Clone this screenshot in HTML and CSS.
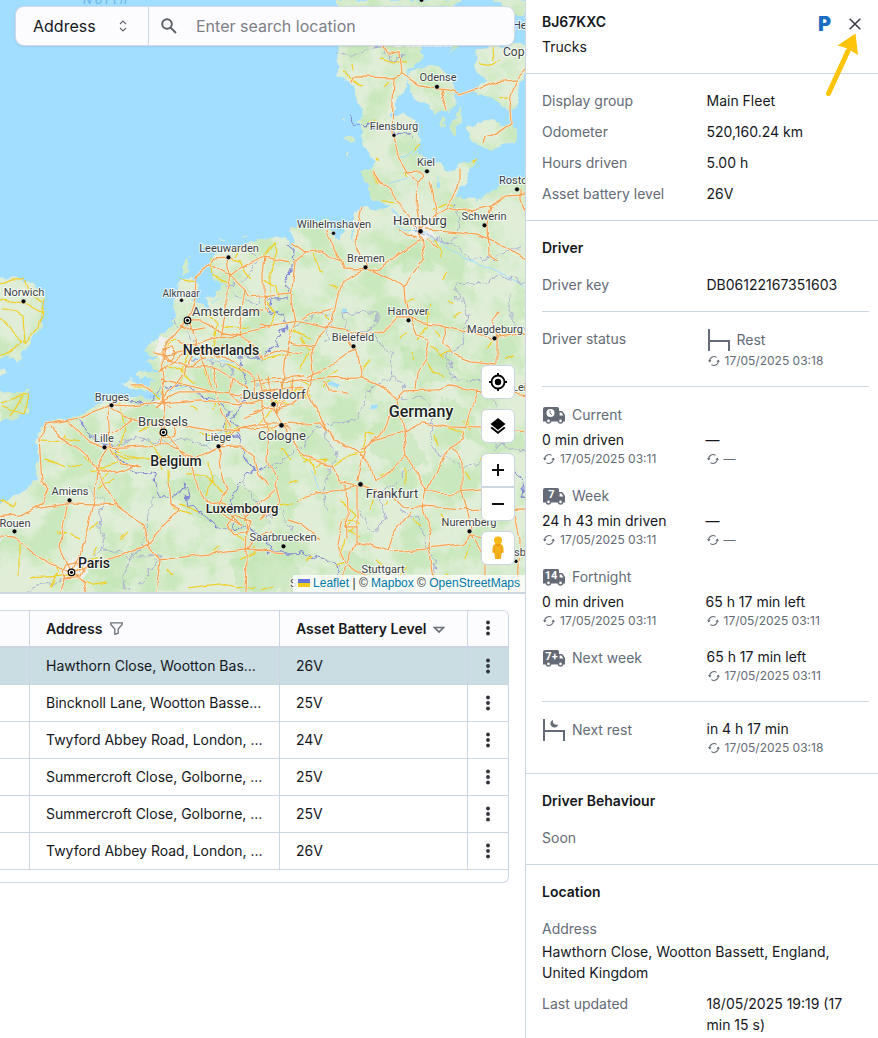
FILE: index.html
```html
<!DOCTYPE html>
<html lang="en">
<head>
<meta charset="utf-8">
<title>Fleet map</title>
<link rel="stylesheet" href="styles.css">
</head>
<body>
<svg class="sprite" aria-hidden="true">
  <symbol id="sync" viewBox="0 0 12 12"><path d="M1.7 6.6A4.4 4.4 0 0 1 8.6 2.4M10.3 5.4A4.4 4.4 0 0 1 3.4 9.6" fill="none" stroke="currentColor" stroke-width="1.1"/><path d="M0 5.2h3.600L1.700 7.500zM12 6.800H8.400l1.900-2.300z" fill="currentColor"/></symbol>
  <symbol id="dots" viewBox="0 0 4 16"><circle cx="2" cy="2.5" r="1.9"/><circle cx="2" cy="8" r="1.9"/><circle cx="2" cy="13.5" r="1.9"/></symbol>
  <symbol id="van" viewBox="0 0 24 24"><path fill="currentColor" d="M3 4h12.500q1.500 0 1.500 1.500V8h2.500q1 0 1.600.900L23 12v6.500h-1.600a3 3 0 0 1-5.800 0H9.400a3 3 0 0 1-5.800 0H1V6q0-2 2-2z"/><path fill="#fff" d="M17.600 9.500h1.900l1.900 2.900h-3.800z"/><circle cx="6.500" cy="17.900" r="1.300" fill="#fff"/><circle cx="18.500" cy="17.900" r="1.300" fill="#fff"/></symbol>
</svg>
<div class="app">
<main class="main">
  <section class="map" aria-label="Map">
    <svg class="map-canvas" viewBox="0 0 525 592" preserveAspectRatio="xMidYMid slice" aria-hidden="true">
      <defs>
        <filter id="coast" x="0" y="0" width="525" height="592" filterUnits="userSpaceOnUse" color-interpolation-filters="sRGB"><feTurbulence type="fractalNoise" baseFrequency=".09" numOctaves="3" seed="4"/><feDisplacementMap in="SourceGraphic" scale="11" xChannelSelector="R" yChannelSelector="G"/></filter>
        <filter id="bend" x="0" y="0" width="525" height="592" filterUnits="userSpaceOnUse" color-interpolation-filters="sRGB"><feTurbulence type="fractalNoise" baseFrequency=".05" numOctaves="2" seed="9"/><feDisplacementMap in="SourceGraphic" scale="8" xChannelSelector="R" yChannelSelector="G"/></filter>
        <filter id="jag" x="0" y="0" width="525" height="592" filterUnits="userSpaceOnUse" color-interpolation-filters="sRGB"><feTurbulence type="fractalNoise" baseFrequency=".12" numOctaves="2" seed="3"/><feDisplacementMap in="SourceGraphic" scale="12" xChannelSelector="R" yChannelSelector="G"/></filter>
        <filter id="woods" x="0" y="0" width="525" height="592" filterUnits="userSpaceOnUse" color-interpolation-filters="sRGB"><feTurbulence type="fractalNoise" baseFrequency=".03" numOctaves="5" seed="12"/><feColorMatrix values="0 0 0 0 .79  0 0 0 0 .91  0 0 0 0 .74  4 0 0 0 -1.650"/><feComposite in2="SourceGraphic" operator="in"/></filter>
        <g id="land">
          <path d="M0 502L20 495 30 487 37 478 38 462 38 435 43 425 67 420 82 415 100 403 110 398 127 395 147 399 158 396 153 391 133 390 122 383 130 378 150 386 155 380 135 374 138 370 157 372 150 364 147 361 160 360 143 353 160 338 173 322 177 293 180 280 193 279 197 290 193 303 207 308 206 297 216 299 222 285 214 280 210 265 212 257 227 250 247 244 270 238 277 238 285 242 293 244 290 230 300 222 327 220 333 232 340 242 344 232 338 226 352 224 357 208 362 206 373 210 390 208 398 220 405 228 396 214 384 203 370 201 368 185 358 173 373 167 375 160 363 147 360 130 355 124 360 117 358 100 352 83 335 73 340 47 337 0 462 0 430 30 420 45 423 57 414 62 407 75 406 88 397 97 393 117 417 117 418 132 420 147 405 157 418 150 427 163 440 165 457 173 460 163 477 158 468 177 457 197 477 200 490 192 500 185 530 177 530 600 -5 600z"/>
          <path d="M407 79L414 68 433 65 448 74 457 97 450 110 437 113 420 103 411 92zM473 67L477 50 490 47 530 43 530 70 518 87 513 110 500 107 493 97 473 93 484 80zM467 127L487 120 513 127 518 140 505 146 487 150 469 140zM460 107L463 112 455 136 450 130zM492 0h33v18l-12-6zM438 117l8 6-3 4zM450 52l5-8 2 6z"/>
          <path d="M-5 276L17 278 33 283 43 293 44 312 37 332 27 345 17 362 8 356-5 365zM-5 370l10-2 3 6-13 6zM-5 393L28 392 27 412 18 416 8 420-5 425z"/>
          <path d="M181 268l6-8 1 8-6 6zM188 257l6-5-4 6zM200 247l10-4-7 5zM217 241l10-3-4 3zM243 237l9-2-6 3zM343 118l3-3 1 6zM344 138l8-3 5 6-7 3zM346 153l3-3v6z"/>
        </g>
        <path id="trunk" d="M352 82L353 77 393 78 402 74 420 86 437 89 452 91 459 94 478 88 493 82 517 80 528 68M383 47L387 52 400 53 402 74 394 78 393 103 392 133 397 155 407 172 418 183 417 207 420 230M440 90L442 97 446 110M517 80L510 95 509 110 510 125 497 134 487 137 483 144M405 172L420 171 424 175 418 183M420 231L435 215 447 209 455 211 480 209 490 207 507 195 528 194M460 170L460 183 453 200 447 209M373 172L380 182 392 190 397 202 410 215 417 228M429 182L432 195 434 205 436 217M520 190L520 200 525 213M425 230L440 231 475 235 489 240 505 247 528 261M492 207L488 225 489 255 498 261M420 240L413 244 395 258 380 268 370 270 355 271 343 270 340 260 330 237 328 230M362 208L357 230 356 245 361 255 367 268M342 262L323 252 305 253 297 247 292 245M305 253L295 262 293 280 291 300 295 325M367 270L342 283 338 295 332 322 328 328M373 270L390 277 405 288 406 300 410 317M420 232L424 258 412 275 405 288M425 240l12 8M400 229l8 6 10 2
          M260 325L267 327 300 322 327 328 360 335 383 331 397 317 410 317 423 323 443 325 467 330 493 338 528 333M443 325L444 345 453 355 470 361 495 364M497 335V365M497 338l-4-18 6-10M410 317L417 335 428 340 425 357 417 372 415 390M398 402L387 420 380 435 365 448 358 480M295 325L285 355 282 382M328 328L310 348 313 372 307 392M260 385L300 380 327 378 362 377 380 385 397 400M307 377L327 367 345 355 357 350 362 377M353 350l-8-12M397 400L405 392 435 391 450 386 475 390 528 396M282 425L290 438 300 453 313 460 330 465 340 482 357 485M307 392L317 412 332 438 357 453 370 465 375 482M282 425L320 422 333 438M325 382l6 10 16 1M360 485L393 498 403 508 423 507 460 510 528 508M397 400L403 430 407 455 423 485 427 492 423 508 432 528 430 548 437 592M360 450L377 440 403 432 423 422 447 427 480 428 528 432M427 492L440 462 450 448 463 462 463 492 473 528M427 492L450 493 480 490M478 390L470 415 463 440 450 448M357 485V540L348 562 338 592M345 485L347 540M357 542L390 552 430 549 460 545 470 535 500 540M388 552L393 535 410 512M375 482L393 468 407 455M278 475L275 485 280 502 260 520M297 503L317 493 345 490 357 485M345 528h12M343 520l-5 25 8 18 14 10 30 6M470 535l15 22 0 35M515 515l5 25-2 52M320 540l-18-15-15-5
          M250 383L263 380 285 378 305 376M250 396L266 392 280 390 303 387M258 374L262 392 262 412 270 432M270 376L272 400 276 412 282 425M282 382L280 400 276 412M292 379l-2 14-14 20M262 405l14 4 16-4 14-12M253 412l20-8M270 432l12-7 8 5M240 398l22 2M245 418l17-8M240 430l28-2M270 432l-2 28 8 15M312 346l-24-4M303 320l12-8 18-4M262 357l20-7 20 2
          M72 572L113 558 147 545 160 560 200 555 247 550 285 553M243 505L247 528 245 592M160 560L156 592M39 438L42 482 50 490 43 502 20 515-2 517M50 425L60 438 90 458 97 470 95 495 88 530 80 555 72 570M39 438l8-15L80 417 108 405 133 406 163 403 200 400 240 405 262 400M67 420L90 442 105 448M108 406L110 448M110 408L133 420 160 425 185 425 215 430 240 432M105 448L127 447 160 445 163 432M112 435L133 420M163 432L165 402 162 378M97 470L117 507 143 525 148 545M68 503L117 505M67 505L60 548 70 568M33 508L68 503M-2 537L15 538 33 553 50 565 70 572M110 448L120 465 140 468M107 450l-12 18 20 6 22-8M160 445L180 450 195 458 218 446 240 445M218 446L222 475 228 490 215 510 240 525M163 432L178 447 190 460 195 480 205 500 225 505 240 525M218 446L235 432 255 425 282 425M147 545L165 525 180 510 172 505 170 480M243 520L255 508 275 490M66 564l10-2 6 8-4 8-12 1-4-7zM72 572l12 10 2 10M66 576l-6 16M228 525l10-8 12 4-4 10-12 2zM163 420l10 4 2 12-10 4-6-8zM157 408l8-6 6 6M240 445l14 14 4 16 10 10M262 552l-14-2 8-14 16-4
          M187 320L178 330 165 345 163 360 165 378 162 402M190 320L197 345 183 375 163 400M197 345L220 337 238 335 270 328M150 352L167 355 197 350 217 355 233 362 253 378M163 355L187 368 213 368 233 378 245 390M163 402L180 392 213 392 240 395M198 348L213 390 230 428M195 278L194 300 187 320M195 278L210 265 215 258 228 257 234 258M228 257L230 276 227 290 227 310 222 336M210 265L230 276 240 268 262 257 290 262M230 276L245 290 250 297 270 295 292 293M245 290L238 335M264 257L262 275 262 292M177 340l10 6 10-2M180 324l14 6 12-2M187 320l13 0 16 10 22 5M162 348l10-2 4 8-6 6-8-3zM160 372l12-10 14-8M190 368l10-8 14-2M213 368l4 20M222 345l-4 12M233 378l-3 15 10 10M253 378l2 20M162 378l20 6 30 8M238 335l18 10 6 15M240 315l24-6M262 292l6 18M130 386l12 0 10 8"/>
      </defs>
      <rect width="525" height="592" fill="#a2deff"/>
      <g filter="url(#coast)"><use href="#land" fill="#e0eed8"/></g>
      <g filter="url(#coast)"><g filter="url(#woods)"><use href="#land"/></g></g>
      <g fill="#bfe6b2" opacity=".5" filter="url(#jag)"><path d="M165 480l50-5 40 15 15 35-40 5-40-15-20-20zM400 345l40 10 12 24-30 5-15-15zM370 420l40 10 20 35-35 5-25-20zM300 430l28 5 10 28-30-7zM440 395l30 15 20 40-40-20zM230 560l60-5 20 37-70 0zM90 570l30-20 18 25-20 17zM400 245l25 5 10 20-30 3zM345 552l30 10-12 30-25-4zM430 350l24 8 8 16-24-4z"/></g>
      <g fill="#f0f1ee" filter="url(#coast)"><path d="M160 338l12 4 3 12-14 8-7-8zM66 560l14-4 8 14-8 12-16-5zM410 226l18-2 6 10-10 8-14-4zM152 402l12-5 8 8-10 5z"/></g>
      <g fill="none" stroke="#a2deff" filter="url(#bend)">
        <path d="M393 222L405 229 421 233 440 242 465 258 490 268 505 275 525 287M352 224l1 18M170 392l20-7M185 356l48 8M390 185l22-10M400 157l20-10M310 470l8 16 9 10M212 303l8-5M438 186v-9M206 444l20-14M332 386l8-1M370 408l8-1M344 309v4"/>
        <path stroke-width="4" d="M438 190v-7M331 386h7M370 408h7M344 308v4M216 282l4 4M338 233v6"/>
      </g>
      <g class="line-state" filter="url(#jag)">
        <path d="M337 53l18 3 14-7 14-2 8 12 15-2M455 205l6 20-8 20-20-5-12-4-7-7M440 240l18 7 20 15 14-5 30-10M525 283l-25-8-20 10-24-2 2 17M325 342l8-27-18-2-20 14M343 313l30-2 6 12-18 10-16-4-2-16M373 333l18 22 2 25 12 3-4 18 20-6 15 22-8 20 10 18 28 12 22-8 20-20M393 375l-26 16-8 28-22 4-22 5-12 18-24 16-20 6M320 423l16 30-14 40 8 20M357 508l15 24 14-12-8-24 20-16 14-14M400 510l16 6 10 25 10 30-6 21M460 295l8 18-8 34-14 10 6 20 28 4 20 6M260 382l-20 18M170 320l18 10 10 22-8 8 40 6 6 18M113 445l20-6 30 4 20-5 30 10M88 487l14 13-2 28 4 20-12 10-22 22-32 5-14 10M100 548l30 10 30-3-20 32M148 545l-16 8-10 25 5 14M157 495l-10 20-2 30M247 244l8 14-3 14-8 8-16 5 8 12 20 6 13-6M243 480l10 18 17 25M262 517l20-6 10 20M510 294v30l15 4M487 390l14 24-3 32 27 5"/>
      </g>
      <g class="line-border" filter="url(#jag)">
        <path d="M285 246L293 248 292 268 287 285 286 298 270 298 268 310 285 315 285 327 275 345 260 358 237 358 247 382 243 400 233 418 240 442 248 462 255 468 243 478 230 500 235 515 233 526M123 400L147 405 163 388 187 385 207 398 230 412 223 428 240 440M82 417L83 428 97 442 113 445 115 455 133 470 155 475 157 495 180 495 185 482 187 502 203 515 217 527 247 528 267 540 270 552 297 552 340 565 334 592M350 113L357 125 370 126 388 130 400 134 413 134M255 468l20 2M513 468l10 18 3 14"/>
      </g>
      <g fill="none" filter="url(#bend)">
        <path class="road-minor" d="M0 284l12-5 13 0 5 14 12 10M0 300l22 3 20 11M25 345l-2-28-22-10M0 318l22 25-22 12M44 300l-5 28-14 17M0 402l20-6 8 0-4 18-24-8M22 397l-12 19M380 58l12 4 15 0M352 64l1 6M345 73l10 8 8 6M383 87l6-5M480 64l14 2 6-6M492 48l1 14M500 98l8-1M370 122l7-2M377 158l2 4M420 145l-6 6M430 210l14-6 10 2M471 163l6-4M404 172l2 6M373 174l5 8M382 202l15 1M435 240l6 12 0 6M313 255l6 16 4 2M330 283l8 4M442 280l6-8M330 320l-4-6M262 258l12-16 3 10-8 20 0 20M262 280l14 5 2 12M267 300l9 12-6 16M212 257l2 20 14 6M228 257l12 4 12 18M236 257l6-10M180 278l14 4M155 357l10-10 10-8M167 365l15 6 0 16M190 352l-10 20 14 12M200 310l18 14-4 24M222 325l26 3M225 365l26 10M205 372l6 15M39 440l25 2 0-8M62 438l18 3M45 460l20 7M68 465l14 1M85 458l22 14-6 14M90 470l20-5 12-4M100 490l13-10M132 388l14 0 14 12M120 400l6 30-8 20 20 10M140 432l16-12 12 4M150 440l10 18 4 12M170 470l1 24M185 475l20 0 22 20M209 460l2 20-4 17M185 450l8 24 10 24M105 448l22 10 36 0M180 505l16 6M190 515l-15-6M225 420l0 16 14-8M190 405l8 6M200 432l14 3M213 410l2-8M70 535l10 4M57 533l10 2M90 530l8-8M92 555l6-7M120 540l8-8M50 560l8 12-8 16M28 578l42-2 24 8 14-2M19 540l0 36M85 560l12-2M0 500l14 8 2-6M188 588l30-4 18 4 20-2M240 560l14-6 0-8M167 569l5 6M210 553l8-6M233 530l12 12M262 360l26-6 0-10M300 380l8 4 2 12M262 385l10 14 28-10M290 380l0 12 16 4-8-10M270 400l24 6M252 430l16-14 10-20M267 425l14 14M300 338l10 14-10 20M290 332l20 6M362 368l8-10M325 390l6-8M327 378l12-8M425 360l8 12 12 6M440 355l12-1M415 362l-3-8M487 348l8-12M435 435l3 12M417 340l10-14 4-22M363 448l4-16 8 2M300 455l14 10 0 10M304 462l22-3-10 8M333 465l18-10 14-4M405 485l0-16M340 500l14 16-8 14 14 8M342 520l18 4-12 10M345 540l-4 16 8 8M335 565l12-3M370 508l6-14M384 506l4-4M392 470l-12 4M465 470l5 10M463 420l8 10-2-12M468 545l-3 14M447 427l20 8M440 580l8-6M260 590l14-4M290 485l8-3M300 500l14-5M280 506l14-2M290 460l-9-12M425 312l6 4M433 330l8 8M447 300l6 4M455 318l6-4M400 338l6-4M415 300l-8 2M430 345l14 14M420 525l-8-6M480 460l8-6M505 360l10-4M514 330l8 4M500 470l8 8M440 515l6 10M375 560l8 6M400 575l8-8M320 575l10 6M305 560l8-4"/>
        <use class="road-case" href="#trunk"/>
        <use class="road-trunk" href="#trunk"/>
      </g>
      <g class="place town">
        <text x="438" y="81">Odense</text><text x="394" y="130">Flensburg</text><text x="426" y="166">Kiel</text><text x="499" y="184" class="start">Rosto</text><text x="484" y="220">Schwerin</text><text x="334" y="228">Wilhelmshaven</text><text x="366" y="262">Bremen</text><text x="229" y="252">Leeuwarden</text><text x="24" y="296">Norwich</text><text x="181" y="297" class="small">Alkmaar</text><text x="408" y="315">Hanover</text><text x="353" y="341">Bielefeld</text><text x="495" y="333">Magdeburg</text><text x="112" y="401">Bruges</text><text x="104" y="442">Lille</text><text x="218" y="441">Liège</text><text x="70" y="495">Amiens</text><text x="15" y="527">Rouen</text><text x="283" y="541">Saarbruecken</text><text x="469" y="526">Nuremberg</text><text x="383" y="573">Stuttgart</text><text x="513" y="29" class="start">He</text><text x="512" y="391" class="start">Lei</text><text x="514" y="556" class="start">sb</text><text x="290" y="587" class="start">S</text>
      </g>
      <g class="place city"><text x="420" y="225">Hamburg</text><text x="226" y="316">Amsterdam</text><text x="274" y="399">Dusseldorf</text><text x="282" y="440">Cologne</text><text x="163" y="426">Brussels</text><text x="392" y="498">Frankfurt</text></g>
      <g class="place town"><text x="503" y="56" class="start large">Cop</text></g>
      <g class="place country"><text x="221" y="355">Netherlands</text><text x="176" y="466">Belgium</text><text x="242" y="513" class="minor">Luxembourg</text><text x="421" y="417" class="major">Germany</text><text x="94" y="568">Paris</text><text x="423" y="46">Denmark</text></g>
      <text class="sea-name" x="83" y="4">North</text>
      <g fill="#000" stroke="#fff" stroke-opacity=".5"><circle cx="437" cy="87" r="2.400"/><circle cx="394" cy="135.500" r="2"/><circle cx="427" cy="171.500" r="2.400"/><circle cx="517" cy="189.500" r="2.400"/><circle cx="484.500" cy="225.500" r="2.400"/><circle cx="333.500" cy="233.500" r="2"/><circle cx="365.500" cy="267.500" r="2.400"/><circle cx="420.500" cy="231.500" r="2.600"/><circle cx="228.500" cy="257.500" r="2.400"/><circle cx="23.500" cy="301.500" r="2.400"/><circle cx="181.500" cy="300.500" r="2"/><circle cx="408.500" cy="320.500" r="2.400"/><circle cx="353.500" cy="346.500" r="2.400"/><circle cx="494.500" cy="338.500" r="2.400"/><circle cx="111.500" cy="405.500" r="2.400"/><circle cx="104.500" cy="447.500" r="2.400"/><circle cx="218.500" cy="446.500" r="2.400"/><circle cx="69.500" cy="500.500" r="2.400"/><circle cx="14.500" cy="531.500" r="2.400"/><circle cx="283.500" cy="546.500" r="2.400"/><circle cx="273.500" cy="404.500" r="2.600"/><circle cx="281.500" cy="425.500" r="2.600"/><circle cx="360.500" cy="484.500" r="2.600"/><circle cx="469.500" cy="531.500" r="2.400"/><circle cx="516" cy="561.500" r="2"/><circle cx="421.500" cy="0" r="2.400"/></g>
      <g><g fill="#fff" stroke="#000" stroke-width="1.200"><circle cx="187.500" cy="320.500" r="3.300"/><circle cx="163.500" cy="432.500" r="3.300"/><circle cx="71.500" cy="572.500" r="3.300"/></g><circle cx="187.500" cy="320.500" r="1.600"/><circle cx="163.500" cy="432.500" r="1.600"/><circle cx="71.500" cy="572.500" r="1.600"/></g>
    </svg>

    <form class="search">
      <button type="button" class="search-type">Address
        <svg width="8" height="12" viewBox="0 0 8 12" fill="none" stroke="#60656e" stroke-width="1.200"><path d="M1 4l3-3 3 3M1 8l3 3 3-3"/></svg>
      </button>
      <svg class="search-icon" width="16" height="16" viewBox="0 0 16 16" fill="none" stroke="#5c6068" stroke-width="2"><circle cx="6" cy="6" r="4.800"/><path d="M9.600 9.600l5.400 5.400"/></svg>
      <input class="search-input" type="text" placeholder="Enter search location" aria-label="Enter search location">
    </form>

    <div class="controls">
      <button type="button" aria-label="Locate"><svg width="20" height="20" viewBox="0 0 20 20"><g fill="none" stroke="#000" stroke-width="1.800"><circle cx="10" cy="10" r="6.500"/><path d="M10 1v3M10 16v3M1 10h3M16 10h3"/></g><circle cx="10" cy="10" r="3.200"/></svg></button>
      <button type="button" aria-label="Layers"><svg width="16" height="18" viewBox="0 0 16 18"><path d="M8 1l7.500 6L8 13 .5 7zM1.900 9.800L8 14.500l6.100-4.700 1.400 1.100L8 17 .5 10.900z"/></svg></button>
      <div class="zoom">
        <button type="button" aria-label="Zoom in"><svg width="12" height="12" viewBox="0 0 12 12"><path d="M5 0h2v5h5v2H7v5H5V7H0V5h5z" fill="#111"/></svg></button>
        <button type="button" aria-label="Zoom out"><svg width="12" height="12" viewBox="0 0 12 12"><path d="M0 5h12v2H0z" fill="#111"/></svg></button>
      </div>
      <button type="button" aria-label="Street view"><svg width="14" height="24" viewBox="0 0 14 24"><path fill="#f5b11c" d="M4 8.500h6q2 0 2.200 2l.6 6-1.800.300-.5 1.200-.6 5H4.100l-.6-5-.5-1.200-1.800-.300.600-6q.2-2 2.200-2z"/><path fill="#e88f14" d="M3.500 8h7L7 10.500zM6.600 17h.8v6h-.8zM3.200 11h.6l-.3 6h-.6zM10.200 11h.6l.3 6h-.6z"/><circle cx="7" cy="4.600" r="4" fill="#fbb917"/></svg></button>
    </div>

    <p class="attribution"><svg width="12" height="8" viewBox="0 0 12 8"><path fill="#6475dc" d="M0 0h12v4H0z"/><path fill="#f0cd12" d="M0 4h12v4H0z"/></svg> <a href="#">Leaflet</a> | © <a href="#">Mapbox</a> © <a href="#">OpenStreetMaps</a></p>
  </section>

  <section class="grid-box">
    <table class="assets">
      <colgroup><col class="c-edge"><col class="c-address"><col class="c-battery"><col class="c-menu"></colgroup>
      <thead><tr><th></th><th>Address <svg class="funnel" width="13" height="13" viewBox="0 0 13 13" fill="none" stroke="#6b7079" stroke-width="1.300"><path d="M.800.800h11.400v1.600L8.200 7v4.200l-3.400 1.100V7L.800 2.400z"/></svg></th><th>Asset Battery Level <svg class="sort" width="12" height="8" viewBox="0 0 12 8" fill="none" stroke="#6b7079" stroke-width="1.700"><path d="M1.500 1.500h9L6 6z"/></svg></th><th><button type="button" class="menu" aria-label="Columns"><svg><use href="#dots"/></svg></button></th></tr></thead>
      <tbody>
        <tr class="selected"><td></td><td>Hawthorn Close, Wootton Bas...</td><td>26V</td><td><button type="button" class="menu" aria-label="Row menu"><svg><use href="#dots"/></svg></button></td></tr>
        <tr><td></td><td>Bincknoll Lane, Wootton Basse...</td><td>25V</td><td><button type="button" class="menu" aria-label="Row menu"><svg><use href="#dots"/></svg></button></td></tr>
        <tr><td></td><td>Twyford Abbey Road, London, ...</td><td>24V</td><td><button type="button" class="menu" aria-label="Row menu"><svg><use href="#dots"/></svg></button></td></tr>
        <tr><td></td><td>Summercroft Close, Golborne, ...</td><td>25V</td><td><button type="button" class="menu" aria-label="Row menu"><svg><use href="#dots"/></svg></button></td></tr>
        <tr><td></td><td>Summercroft Close, Golborne, ...</td><td>25V</td><td><button type="button" class="menu" aria-label="Row menu"><svg><use href="#dots"/></svg></button></td></tr>
        <tr><td></td><td>Twyford Abbey Road, London, ...</td><td>26V</td><td><button type="button" class="menu" aria-label="Row menu"><svg><use href="#dots"/></svg></button></td></tr>
      </tbody>
    </table>
  </section>
</main>

<aside class="panel">
  <header class="panel-head">
    <div class="ident"><h1>BJ67KXC</h1><p>Trucks</p></div>
    <span class="parking">P</span>
    <button type="button" class="close" aria-label="Close"><svg width="12" height="12" viewBox="0 0 12 12" fill="none" stroke="#33373f" stroke-width="1.500"><path d="M.700.700l10.600 10.600M11.300.700L.700 11.300"/></svg></button>
    <svg class="pointer" width="34" height="64" viewBox="0 0 34 64" aria-hidden="true"><path d="M3.500 60.500L23 18" stroke="#fdc408" stroke-width="5" stroke-linecap="round"/><path d="M30.500.500L12.500 12.500l8.500 2.500 4.500 2.500 7.500 4.500z" fill="#fdc408"/></svg>
  </header>

  <section class="block">
    <div class="pair"><span class="label">Display group</span><span>Main Fleet</span></div>
    <div class="pair"><span class="label">Odometer</span><span>520,160.24 km</span></div>
    <div class="pair"><span class="label">Hours driven</span><span>5.00 h</span></div>
    <div class="pair"><span class="label">Asset battery level</span><span>26V</span></div>
  </section>

  <section class="block driver">
    <h2>Driver</h2>
    <div class="pair"><span class="label">Driver key</span><span>DB06122167351603</span></div>
    <hr>
    <div class="pair"><span class="label">Driver status</span>
      <div><div class="caption"><svg viewBox="0 0 24 24" fill="none" stroke="currentColor" stroke-width="2"><path d="M2 1v22M2 13h20v10"/></svg>Rest</div><div class="stamp"><svg><use href="#sync"/></svg>17/05/2025 03:18</div></div>
    </div>
    <hr>
    <div class="drive">
      <div class="caption"><svg viewBox="0 0 24 24"><use href="#van"/><circle cx="8.500" cy="10" r="4" fill="#fff"/><path d="M8 7.500V10l1.800 1.500" fill="none" stroke="currentColor"/></svg>Current</div>
      <div>0 min driven<div class="stamp"><svg><use href="#sync"/></svg>17/05/2025 03:11</div></div>
      <div>—<div class="stamp"><svg><use href="#sync"/></svg>—</div></div>
    </div>
    <div class="drive">
      <div class="caption"><svg viewBox="0 0 24 24"><use href="#van"/><text class="van-num" x="9.500" y="14">7</text></svg>Week</div>
      <div>24 h 43 min driven<div class="stamp"><svg><use href="#sync"/></svg>17/05/2025 03:11</div></div>
      <div>—<div class="stamp"><svg><use href="#sync"/></svg>—</div></div>
    </div>
    <div class="drive">
      <div class="caption"><svg viewBox="0 0 24 24"><use href="#van"/><text class="van-num" x="9" y="14">14</text></svg>Fortnight</div>
      <div>0 min driven<div class="stamp"><svg><use href="#sync"/></svg>17/05/2025 03:11</div></div>
      <div>65 h 17 min left<div class="stamp"><svg><use href="#sync"/></svg>17/05/2025 03:11</div></div>
    </div>
    <div class="pair">
      <div class="caption"><svg viewBox="0 0 24 24"><use href="#van"/><text class="van-num" x="9.500" y="14">7+</text></svg>Next week</div>
      <div>65 h 17 min left<div class="stamp"><svg><use href="#sync"/></svg>17/05/2025 03:11</div></div>
    </div>
    <hr>
    <div class="pair">
      <div class="caption"><svg viewBox="0 0 24 24"><path d="M2 1v22M2 13h20v10" fill="none" stroke="currentColor" stroke-width="2"/><path d="M11 2q-3 1-2.500 4.500Q9.500 9.500 12.500 9.500q3 0 3.800-3-3 1-4.500-.800Q10.300 4 11 2z" fill="currentColor"/></svg>Next rest</div>
      <div>in 4 h 17 min<div class="stamp"><svg><use href="#sync"/></svg>17/05/2025 03:18</div></div>
    </div>
  </section>

  <section class="block driver"><h2>Driver Behaviour</h2><p class="label">Soon</p></section>

  <section class="block location">
    <h2>Location</h2>
    <div class="address"><span class="label">Address</span><span>Hawthorn Close, Wootton Bassett, England, United Kingdom</span></div>
    <div class="pair"><span class="label">Last updated</span><span>18/05/2025 19:19 (17 min 15 s)</span></div>
  </section>
</aside>
</div>
</body>
</html>
```
FILE: styles.css
```css
* { box-sizing: border-box; }
body { margin: 0; background: #fff; color: #15171c; font: 14px/21px Inter, "Liberation Sans", sans-serif; }
h1, h2, p { margin: 0; font-size: 14px; font-weight: 400; }
h1, h2 { font-weight: 600; }
button, input { font: inherit; color: inherit; margin: 0; padding: 0; border: 0; background: none; }
.sprite { position: absolute; width: 0; height: 0; }
.app { display: flex; height: 100vh; overflow: hidden; }
.main { flex: 1; min-width: 0; }

.map { position: relative; height: calc(57vh + 2px); border-bottom: 2px solid #ccd5e2; overflow: hidden; }
.map-canvas { display: block; width: 100%; height: 100%; }
.line-state, .line-border { fill: none; stroke: #a9acd2; stroke-width: 1px; }
.line-border { stroke: #8286d3; stroke-width: 1.2px; }
.road-minor { stroke: #f0ce28; stroke-width: 1.2px; }
.road-case { stroke: #f7f1dc; stroke-width: 2.6px; }
.road-trunk { stroke: #f3a050; stroke-width: 1.2px; }
.place { font-family: Roboto, "Noto Sans", sans-serif; text-anchor: middle; fill: #3b3f45; stroke: #fff; stroke-width: 2px; stroke-opacity: .8; stroke-linejoin: round; paint-order: stroke; }
.place .start { text-anchor: start; }
.town { font-size: 11px; }
.town .small { font-size: 10px; }
.town .large { font-size: 12px; }
.city { font-size: 13px; }
.country { font-size: 14px; font-weight: 500; fill: #1c1f24; }
.country .minor { font-size: 13px; }
.country .major { font-size: 16px; }
.sea-name { font: italic 13px Roboto, sans-serif; fill: #69b5f0; letter-spacing: 3px; }

.search { position: absolute; top: 7px; left: 16px; right: 11px; height: 38px; display: flex; align-items: center; background: #fcfcfe; border-radius: 8px; box-shadow: 0 0 0 1px #d3dbea, 0 1px 3px #5a6c8855; font-size: 16px; }
.search-type { width: 133px; height: 100%; padding: 0 21px 0 17px; display: flex; align-items: center; justify-content: space-between; border-right: 1px solid #ccd5e2; }
.search-icon { flex: none; margin: 0 19px 0 12px; }
.search-input { flex: 1; min-width: 0; height: 100%; outline: 0; }
.search-input::placeholder { color: #7c7f86; opacity: 1; }

.controls { position: absolute; right: 10px; bottom: 27px; display: flex; flex-direction: column; gap: 10px; }
.controls button { width: 34px; height: 34px; display: flex; align-items: center; justify-content: center; background: #fff; border: 1px solid #ccd5e2; border-radius: 6px; }
.zoom button:first-child { border-radius: 6px 6px 0 0; }
.zoom button:last-child { border-radius: 0 0 6px 6px; }

.attribution { position: absolute; right: 0; bottom: 0; padding: 0 5px; background: #ffffffcc; font: 12px/17px "Liberation Sans", sans-serif; color: #333; }
.attribution a { color: #0078a8; text-decoration: none; }

.grid-box { margin: 16px 16px 0 0; padding-bottom: 12px; border: 1px solid #ccd5e2; border-left: 0; border-radius: 0 6px 6px 0; overflow: hidden; }
.assets { width: 100%; table-layout: fixed; border-collapse: separate; border-spacing: 0; }
.c-edge { width: 30px; }
.c-battery { width: 188px; }
.c-menu { width: 40px; }
.assets th, .assets td { height: 37px; padding: 0 0 0 16px; border-right: 1px solid #ccd5e2; border-bottom: 1px solid #ccd5e2; text-align: left; white-space: nowrap; overflow: hidden; }
.assets th { background: #fcfcfe; border-bottom-width: 2px; font-weight: 600; }
.assets th:last-child, .assets td:last-child { border-right: 0; padding: 0; text-align: center; }
.selected td { background: #c9dde3; }
.funnel { margin-left: 4px; vertical-align: -1px; }
.sort { margin-left: 3px; vertical-align: 0; }
.menu { display: block; width: 100%; height: 16px; }
.menu svg { display: block; width: 4px; height: 16px; margin: 0 auto; fill: #2f3238; }

.panel { flex: none; width: 353px; border-left: 1px solid #ccd5e2; overflow: hidden; }
.panel-head { position: relative; display: flex; align-items: flex-start; padding: 11px 16px 16px; border-bottom: 1px solid #ccd5e2; }
.ident { flex: 1; display: grid; gap: 4px; }
.parking { color: #1b6ec2; font-size: 20px; font-weight: 900; line-height: 26px; margin-right: 18px; }
.close { height: 26px; display: flex; align-items: center; margin-right: 1px; }
.pointer { position: absolute; right: 19px; top: 33px; }
.block { display: grid; gap: 10px; padding: 16px 9px 16px 16px; border-bottom: 1px solid #ccd5e2; }
.block.driver { gap: 16px; }
.location { border-bottom: 0; }
.location h2 { margin-bottom: 6px; }
.block hr { width: 100%; height: 1px; margin: 0; border: 0; background: #ccd5e2; }
.label, .caption, .stamp { color: #646b76; }
.pair { display: grid; grid-template-columns: 1fr 1fr; column-gap: 2px; }
.drive { display: grid; grid-template-columns: 1fr 1fr; row-gap: 2px; }
.drive .caption { grid-column: 1 / -1; }
.caption { display: flex; align-items: center; gap: 6px; height: 24px; line-height: 22px; }
.caption svg { flex: none; width: 24px; height: 24px; }
.van-num { font: 700 11px "Liberation Sans Narrow", Roboto, sans-serif; text-anchor: middle; fill: #fff; }
.stamp { display: flex; align-items: center; gap: 5px; padding-left: 1px; font-size: 12px; line-height: 18px; }
.stamp svg { width: 12px; height: 12px; }
.address { display: grid; gap: 2px; }
```
